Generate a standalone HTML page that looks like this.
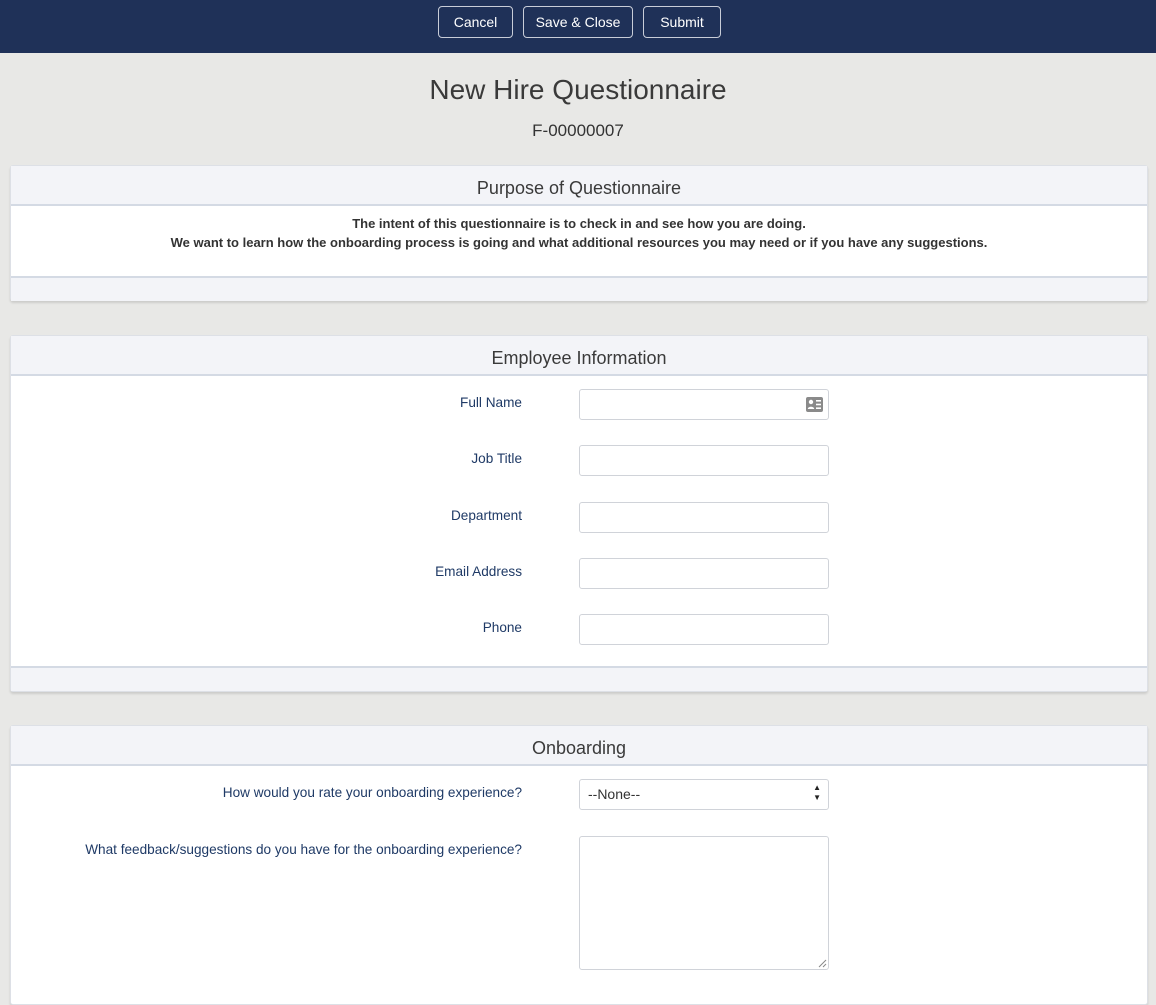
<!DOCTYPE html>
<html><head><meta charset="utf-8"><style>
*{box-sizing:border-box;margin:0;padding:0}
body{width:1156px;height:991px;overflow:hidden;background:#e8e8e6;font-family:"Liberation Sans",sans-serif;position:relative}
.top{position:absolute;left:0;top:0;width:1156px;height:53px;background:#1f3158}
.btn{position:absolute;top:6px;height:32px;border:1px solid #c8cdd8;border-radius:4px;color:#fff;font-size:14px;line-height:30px;text-align:center}
.h1{position:absolute;top:74px;left:0;width:1156px;text-align:center;font-size:28px;color:#3a3a3a;font-weight:300}
.h2{position:absolute;top:121px;left:0;width:1156px;text-align:center;font-size:17px;color:#333}
.card{position:absolute;left:10px;width:1138px;background:#fff;border:1px solid #dde0e6;border-radius:3px;box-shadow:0 2px 2px rgba(0,0,0,.12)}
.ch{height:40px;background:#f3f4f8;border-bottom:2px solid #d4dae4;text-align:center;font-size:18px;color:#3a3a3a;line-height:44px}
.cf{background:#f3f4f8;border-top:2px solid #d4dae4;height:25px}
.lbl{position:absolute;right:634px;font-size:13.6px;color:#1f3a66;text-align:right}
.inp{position:absolute;left:579px;width:250px;height:31px;border:1px solid #d0d3d9;border-radius:3px;background:#fff}
</style></head><body>
<div class="top">
<div class="btn" style="left:438px;width:75px">Cancel</div>
<div class="btn" style="left:523px;width:110px">Save &amp; Close</div>
<div class="btn" style="left:643px;width:78px">Submit</div>
</div>
<div class="h1">New Hire Questionnaire</div>
<div class="h2">F-00000007</div>

<div class="card" style="top:165px;height:136px">
<div class="ch">Purpose of Questionnaire</div>
<div style="height:70px;text-align:center;font-size:13px;font-weight:bold;color:#333;padding-top:8px;line-height:19px">The intent of this questionnaire is to check in and see how you are doing.<br>We want to learn how the onboarding process is going and what additional resources you may need or if you have any suggestions.</div>
<div class="cf"></div>
</div>

<div class="card" style="top:335px;height:357px">
<div class="ch">Employee Information</div>
<div style="height:290px"></div>
<div class="cf"></div>
</div>

<div class="card" style="top:725px;height:280px">
<div class="ch">Onboarding</div>
</div>

<div class="lbl" style="top:395px">Full Name</div>
<div class="inp" style="top:389px"><svg style="position:absolute;right:5px;top:7px" width="17" height="15" viewBox="0 0 17 15"><rect x="0" y="0" width="17" height="15" rx="2" fill="#8a8a8a"/><circle cx="5" cy="5" r="2.2" fill="#fff"/><path d="M1.8 12c0-3 6.4-3 6.4 0z" fill="#fff"/><rect x="10" y="3" width="5" height="1.6" fill="#fff"/><rect x="10" y="6.7" width="5" height="1.6" fill="#fff"/><rect x="10" y="10.4" width="5" height="1.6" fill="#fff"/></svg></div>
<div class="lbl" style="top:451px">Job Title</div>
<div class="inp" style="top:445px"></div>
<div class="lbl" style="top:508px">Department</div>
<div class="inp" style="top:502px"></div>
<div class="lbl" style="top:564px">Email Address</div>
<div class="inp" style="top:558px"></div>
<div class="lbl" style="top:620px">Phone</div>
<div class="inp" style="top:614px"></div>

<div class="lbl" style="top:785px">How would you rate your onboarding experience?</div>
<div class="inp" style="top:779px;font-size:14px;color:#333;line-height:29px;padding-left:8px">--None--<span style="position:absolute;right:7px;top:3px;font-size:8px;line-height:10px;color:#222">▲<br>▼</span></div>
<div class="lbl" style="top:842px">What feedback/suggestions do you have for the onboarding experience?</div>
<div class="inp" style="top:836px;height:134px"><svg style="position:absolute;right:1px;bottom:1px" width="9" height="9" viewBox="0 0 9 9"><path d="M8 1L1 8M8 5L5 8" stroke="#888" stroke-width="1"/></svg></div>
</body></html>
